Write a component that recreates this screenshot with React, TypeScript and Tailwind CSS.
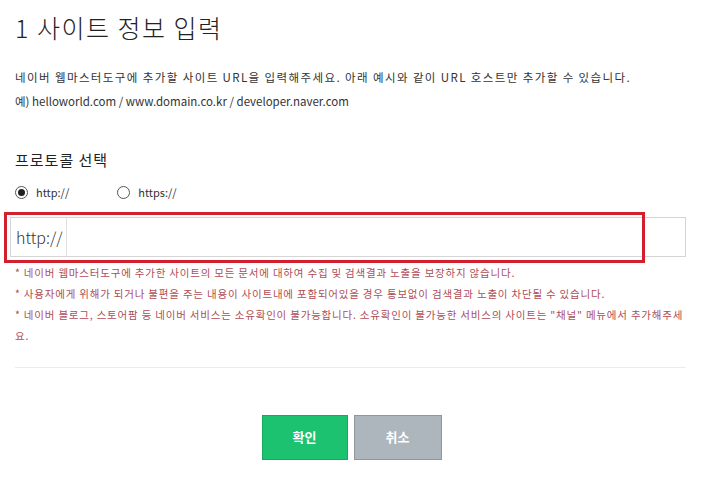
import React from 'react'

const notes = [
  '* 네이버 웹마스터도구에 추가한 사이트의 모든 문서에 대하여 수집 및 검색결과 노출을 보장하지 않습니다.',
  '* 사용자에게 위해가 되거나 불편을 주는 내용이 사이트내에 포함되어있을 경우 통보없이 검색결과 노출이 차단될 수 있습니다.',
  '* 네이버 블로그, 스토어팜 등 네이버 서비스는 소유확인이 불가능합니다. 소유확인이 불가능한 서비스의 사이트는 "채널" 메뉴에서 추가해주세요.',
]

function Radio({checked, label}: {checked?: boolean; label: string}) {
  return (
    <label className="flex items-center gap-[8px]">
      <span className="flex h-[13px] w-[13px] items-center justify-center rounded-full border border-[#555] bg-white">
        {checked && <span className="h-[7px] w-[7px] rounded-full bg-[#222]" />}
      </span>
      <span className="text-[11px] text-[#333]">{label}</span>
    </label>
  )
}

export default function App() {
  return (
    <div
      className="h-[478px] w-[720px] overflow-hidden bg-white text-[#222]"
      style={{fontFamily: '"Noto Sans CJK KR", "Noto Sans", sans-serif'}}
    >
      <div className="pl-[15px] pr-[34px]">
        <h1 className="pt-[9px] text-[25px] font-light leading-[36px] tracking-[1.5px] text-[#222]">
          1 사이트 정보 입력
        </h1>
        <p className="mt-[20px] text-[11.5px] leading-[24px] text-[#333]">
          <span className="tracking-[1.4px]">
            네이버 웹마스터도구에 추가할 사이트 URL을 입력해주세요. 아래 예시와 같이 URL 호스트만 추가할 수 있습니다.
          </span>
          <br />
          <span>예) helloworld.com / www.domain.co.kr / developer.naver.com</span>
        </p>

        <h2 className="mt-[36px] text-[15px] leading-[22px] tracking-[1px] text-[#222]">프로토콜 선택</h2>
        <div className="mt-[13px] flex items-center gap-[48px]">
          <Radio checked label="http://" />
          <Radio label="https://" />
        </div>

        <div className="relative -ml-[5px] mt-[16px]">
          <div className="flex h-[40px] items-stretch border border-[#d5d5d5] bg-white">
            <div className="flex w-[56px] items-center border-r border-[#e0e0e0] pl-[5px] text-[16px] font-light text-[#333]">
              http://
            </div>
            <div className="flex-1" />
          </div>
          <div className="pointer-events-none absolute -left-[6px] -top-[5px] h-[51px] w-[641px] border-[3px] border-[#d2202f]" />
        </div>

        <ul className="mt-[5px] text-[10.5px] leading-[21px] tracking-[0.8px] text-[#b04c56]">
          {notes.map((n, i) => (
            <li key={i}>{n}</li>
          ))}
        </ul>

        <div className="mt-[21px] border-t border-[#ececec]" />

        <div className="mt-[47px] flex justify-center gap-[6px] pl-[2px]">
          <button className="h-[45px] w-[86px] border border-[#18a860] bg-[#1cc270] text-[13px] font-bold text-white">
            확인
          </button>
          <button className="h-[45px] w-[88px] border border-[#8f979e] bg-[#adb5bd] text-[13px] font-bold text-white">
            취소
          </button>
        </div>
      </div>
    </div>
  )
}
